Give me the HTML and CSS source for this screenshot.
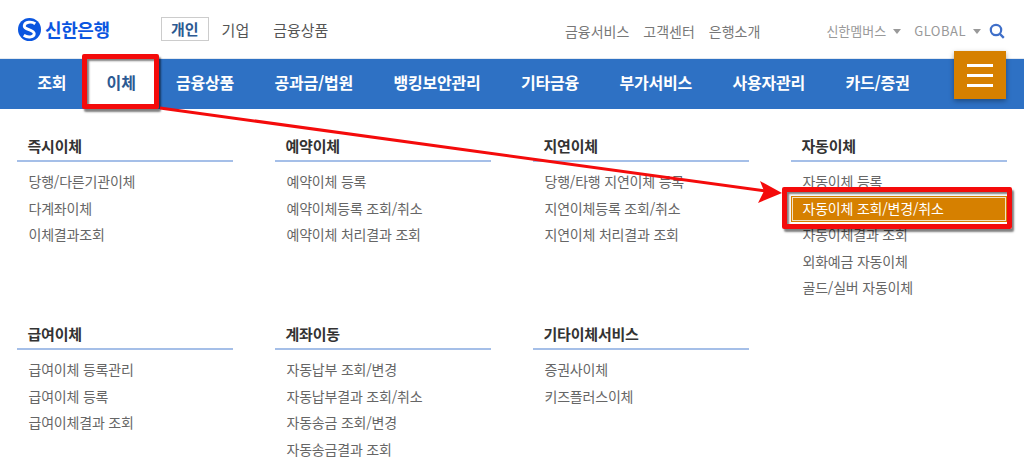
FILE: index.html
```html
<!DOCTYPE html>
<html lang="ko">
<head>
    <meta charset="UTF-8">
    <meta name="viewport" content="width=device-width, initial-scale=1.0">
    <title>신한은행</title>
    <link rel="stylesheet" href="styles.css">
</head>
<body>
    <header class="top">
        <div class="logo">
            <svg width="23" height="23" viewBox="0 0 22 22">
                <circle cx="11" cy="11" r="11" fill="#0b56e0"/>
                <path d="M16.5 5.5C13 3 6.5 3.5 6 7.5C5.5 11.5 15.5 10.5 15.5 15C15.5 18 10 19.5 5.5 16.5" fill="none" stroke="#fff" stroke-width="2.8"/>
            </svg>
            <span>신한은행</span>
        </div>
        <nav class="tabs">
            <a class="tab active">개인</a>
            <a class="tab">기업</a>
            <a class="tab">금융상품</a>
        </nav>
        <div class="util">
            <a>금융서비스</a>
            <a>고객센터</a>
            <a>은행소개</a>
        </div>
        <div class="extra">
            <a class="drop">신한멤버스</a>
            <a class="drop global">GLOBAL</a>
            <svg class="search" width="16" height="16" viewBox="0 0 16 16">
                <circle cx="7" cy="7" r="5.2" fill="none" stroke="#3f6fc9" stroke-width="2.2"/>
                <path d="M10.5 10.5L14.8 14.8" stroke="#3f6fc9" stroke-width="2.4"/>
            </svg>
        </div>
    </header>

    <nav class="mainnav">
        <a>조회</a>
        <a class="current">이체</a>
        <a>금융상품</a>
        <a>공과금/법원</a>
        <a>뱅킹보안관리</a>
        <a>기타금융</a>
        <a>부가서비스</a>
        <a>사용자관리</a>
        <a>카드/증권</a>
    </nav>
    <button class="burger"><i></i><i></i><i></i></button>

    <main class="menu">
        <section class="group">
            <h3>즉시이체</h3>
            <ul>
                <li>당행/다른기관이체</li>
                <li>다계좌이체</li>
                <li>이체결과조회</li>
            </ul>
        </section>
        <section class="group">
            <h3>예약이체</h3>
            <ul>
                <li>예약이체 등록</li>
                <li>예약이체등록 조회/취소</li>
                <li>예약이체 처리결과 조회</li>
            </ul>
        </section>
        <section class="group">
            <h3>지연이체</h3>
            <ul>
                <li>당행/타행 지연이체 등록</li>
                <li>지연이체등록 조회/취소</li>
                <li>지연이체 처리결과 조회</li>
            </ul>
        </section>
        <section class="group">
            <h3>자동이체</h3>
            <ul>
                <li>자동이체 등록</li>
                <li class="picked">자동이체 조회/변경/취소</li>
                <li>자동이체결과 조회</li>
                <li>외화예금 자동이체</li>
                <li>골드/실버 자동이체</li>
            </ul>
        </section>
        <section class="group">
            <h3>급여이체</h3>
            <ul>
                <li>급여이체 등록관리</li>
                <li>급여이체 등록</li>
                <li>급여이체결과 조회</li>
            </ul>
        </section>
        <section class="group">
            <h3>계좌이동</h3>
            <ul>
                <li>자동납부 조회/변경</li>
                <li>자동납부결과 조회/취소</li>
                <li>자동송금 조회/변경</li>
                <li>자동송금결과 조회</li>
            </ul>
        </section>
        <section class="group">
            <h3>기타이체서비스</h3>
            <ul>
                <li>증권사이체</li>
                <li>키즈플러스이체</li>
            </ul>
        </section>
    </main>

    <!-- red callouts drawn over the page -->
    <div class="mark mark-tab"></div>
    <div class="mark mark-item"></div>
    <svg class="arrow" width="1024" height="464" viewBox="0 0 1024 464">
        <path d="M160 108L766 191" stroke="#f40b0b" stroke-width="3" fill="none"/>
        <path d="M782 193L760 181L764 191L758 203Z" fill="#f40b0b"/>
    </svg>
</body>
</html>
```
FILE: styles.css
```css
* {
    box-sizing: border-box;
}
html, body {
    height: 464px;
    overflow: hidden;
}
body {
    position: relative;
    margin: 0;
    background: white;
    font-family: "Noto Sans CJK KR", "Noto Sans", sans-serif;
    color: #666;
}
.top {
    display: flex;
    align-items: center;
    height: 58px;
    padding: 0 19px 0 18px;
}
.logo {
    display: flex;
    align-items: center;
    gap: 4px;
    width: 143px;
    color: #0b56e0;
    font-size: 18px;
    font-weight: 700;
    letter-spacing: -0.4px;
}
.tabs {
    display: flex;
    align-items: center;
    gap: 14px;
    font-size: 15px;
    color: #555;
}
.tab {
    padding: 0 10px 0 0;
}
.tab.active {
    height: 24px;
    line-height: 21px;
    padding: 0 9px;
    border: 1px solid #ccc;
    color: #2c5a92;
    font-weight: 700;
    margin-right: -1px;
}
.util {
    display: flex;
    gap: 14px;
    margin: 3px 0 0 auto;
    font-size: 14px;
    color: #777;
}
.extra {
    display: flex;
    align-items: center;
    margin: 3px 0 0 66px;
    font-size: 13px;
    color: #999;
}
.drop {
    margin-right: 13px;
}
.drop::after {
    content: "";
    display: inline-block;
    margin-left: 7px;
    vertical-align: 2px;
    border: 4px solid transparent;
    border-top: 5px solid #999;
    border-bottom: 0;
}
.global {
    margin-right: 8px;
    letter-spacing: 0.5px;
}
.mainnav {
    display: flex;
    height: 51px;
    padding-left: 17px;
    background: #2e71c4;
    border-top: 1px solid #e4e9f0;
}
.mainnav a {
    padding: 0 20.2px;
    line-height: 47px;
    color: white;
    font-size: 16px;
    font-weight: 700;
    letter-spacing: -0.2px;
}
.mainnav a.current {
    background: white;
    color: #2c5a92;
}
.burger {
    position: absolute;
    top: 51px;
    left: 954px;
    display: flex;
    flex-direction: column;
    justify-content: center;
    gap: 7px;
    width: 52px;
    height: 48px;
    padding: 0 13px;
    border: none;
    background: #d68000;
    box-shadow: 0 2px 5px rgba(0, 0, 0, 0.35);
}
.burger i {
    display: block;
    height: 3px;
    background: white;
}
.menu {
    display: grid;
    grid-template-columns: repeat(4, 215.5px);
    grid-template-rows: 188px auto;
    column-gap: 42.5px;
    align-items: start;
    padding: 26px 0 0 17px;
}
.group h3 {
    margin: 0;
    height: 27px;
    padding-left: 10.5px;
    border-bottom: 2px solid #a5bfe8;
    color: #333;
    font-size: 15px;
    font-weight: 700;
    line-height: 22px;
    letter-spacing: -0.2px;
}
.group ul {
    margin: 7px 0 0;
    padding: 0;
    list-style: none;
    font-size: 14px;
    letter-spacing: -0.2px;
}
.group li {
    height: 26.5px;
    line-height: 25.5px;
    padding-left: 11.5px;
    white-space: nowrap;
}
.group li.picked {
    background: #d68000;
    color: white;
    outline: 1px solid #f3e2c4;
    outline-offset: -2px;
}
/* callouts */
.mark {
    position: absolute;
    border: 5px solid #f40b0b;
    border-radius: 2px;
    box-shadow: 2px 3px 2px rgba(0, 0, 0, 0.5), inset 2px 2px 2px rgba(0, 0, 0, 0.5);
}
.mark-tab {
    left: 82px;
    top: 54px;
    width: 77px;
    height: 55px;
}
.mark-item {
    left: 782px;
    top: 187px;
    width: 230px;
    height: 42px;
}
.arrow {
    position: absolute;
    top: 0;
    left: 0;
}
```
